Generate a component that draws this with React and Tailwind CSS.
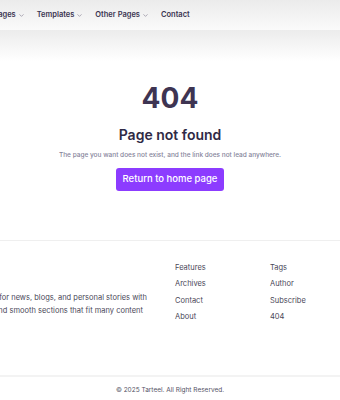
import { ChevronDown } from 'lucide-react';

const navItems = [
  { label: 'Home', drop: true },
  { label: 'Pages', drop: true },
  { label: 'Templates', drop: true },
  { label: 'Other Pages', drop: true },
  { label: 'Contact', drop: false },
];

const colA = ['Features', 'Archives', 'Contact', 'About'];
const colB = ['Tags', 'Author', 'Subscribe', '404'];

const App = () => {
  return (
    <div className="w-full h-[400px] overflow-hidden bg-white text-[#3d3550] font-['Inter','Liberation_Sans',sans-serif]">
      {/* top menu */}
      <nav className="h-[30px] bg-gradient-to-b from-[#ebebeb] to-[#fafafa] flex items-center">
        <div className="flex items-center gap-[12px] ml-[-49px] whitespace-nowrap">
          {navItems.map(item => (
            <span key={item.label} className="flex items-center gap-[2px] text-[7.5px] font-semibold text-[#3a3350]">
              {item.label}
              {item.drop && <ChevronDown size={7} strokeWidth={2} className="text-[#7a7588]" />}
            </span>
          ))}
        </div>
      </nav>

      {/* 404 block */}
      <section className="h-[210px] bg-gradient-to-b from-[#ececec] via-white via-15% to-white flex flex-col items-center pt-[54px]">
        <h1 className="text-[28px] leading-none font-bold text-[#3e3452]">404</h1>
        <h2 className="mt-[16px] text-[14px] leading-[14px] font-semibold text-[#2f2a45]">Page not found</h2>
        <p className="mt-[8px] text-[6.5px] leading-[10px] font-medium text-[#85849a] whitespace-nowrap">
          The page you want does not exist, and the link does not lead anywhere.
        </p>
        <button className="mt-[8px] w-[108px] h-[23px] rounded-[3px] bg-[#8c3cff] text-white text-[9.5px] font-medium">
          Return to home page
        </button>
      </section>

      {/* footer */}
      <footer className="border-t border-[#efefef]">
        <div className="h-[134px] flex ml-[-253px]">
          <div className="w-[400px] pt-[50px] text-[7.5px] leading-[13px] text-[#4a4758] whitespace-nowrap">
            <p className="text-right">A modern template for news, blogs, and personal stories with</p>
            <p className="text-right pr-[4px]">clean layouts and smooth sections that fit many content</p>
          </div>
          <ul className="ml-[28px] w-[95px] pt-[19px] text-[7.5px] text-[#4a4758]">
            {colA.map(l => <li key={l} className="h-[16.3px] leading-[16.3px]">{l}</li>)}
          </ul>
          <ul className="pt-[19px] text-[7.5px] text-[#4a4758]">
            {colB.map(l => <li key={l} className="h-[16.3px] leading-[16.3px]">{l}</li>)}
          </ul>
        </div>
        <div className="border-t-2 border-[#f3f3f3] pt-[7px] text-center text-[6.5px] leading-[12px] text-[#555266]">
          © 2025 Tarteel. All Right Reserved.
        </div>
      </footer>
    </div>
  );
};

export default App;
